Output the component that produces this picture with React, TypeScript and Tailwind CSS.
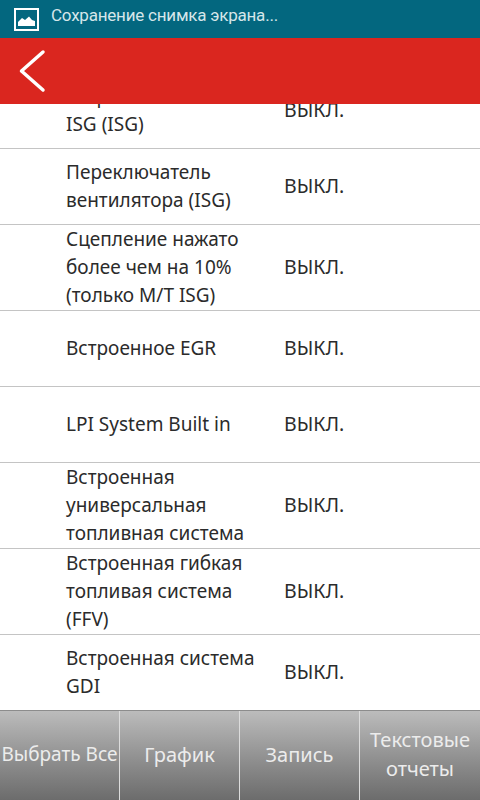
const rows = [
  { lines: ["Встроенная система", "ISG (ISG)"], h: "h-[76px]" },
  { lines: ["Переключатель", "вентилятора (ISG)"], h: "h-[76px]" },
  { lines: ["Сцепление нажато", "более чем на 10%", "(только M/T ISG)"], h: "h-[86px]" },
  { lines: ["Встроенное EGR"], h: "h-[76px]" },
  { lines: ["LPI System Built in"], h: "h-[76px]" },
  { lines: ["Встроенная", "универсальная", "топливная система"], h: "h-[86px]" },
  { lines: ["Встроенная гибкая", "топливая система", "(FFV)"], h: "h-[86px]" },
  { lines: ["Встроенная система", "GDI"], h: "h-[76px]" },
];

const buttons = [
  { text: "Выбрать Все", size: "text-[19px]" },
  { text: "График", size: "text-[20px]" },
  { text: "Запись", size: "text-[20px]" },
  { text: "Текстовые\nотчеты", size: "text-[20px]" },
];

export default function App() {
  return (
    <div className="w-[480px] h-[800px] flex flex-col overflow-hidden bg-white font-['Noto_Sans',sans-serif]">
      {/* Status bar */}
      <div className="h-[38px] shrink-0 bg-[#03677f] flex items-center pl-[14px] gap-[12px]">
        <svg width="25" height="23" viewBox="0 0 25 23" className="shrink-0">
          <rect x="1" y="1" width="23" height="21" fill="#03677f" stroke="#ffffff" strokeWidth="2" />
          <path d="M4 18 V14 L8 10 L11 12 L15 8.5 L18 12 L21 13 V18 Z" fill="#ffffff" />
        </svg>
        <span className="pb-[6px] font-['Roboto',sans-serif] text-[17px] tracking-[-0.22px] text-[#d5e6ea] whitespace-nowrap">Сохранение снимка экрана...</span>
      </div>

      {/* Header */}
      <div className="h-[66px] shrink-0 bg-[#da261f] flex items-center relative z-10">
        <svg width="56" height="56" viewBox="0 0 56 56" className="ml-[5px]" fill="none">
          <path d="M38 9 L16.5 28 L38 47" stroke="#ffffff" strokeWidth="3.5" strokeLinecap="round" strokeLinejoin="round" />
        </svg>
      </div>

      {/* List */}
      <div className="flex-1 min-h-0 overflow-hidden">
        <div className="-mt-[31px]">
          {rows.map((row) => (
            <div key={row.lines.join()} className={`${row.h} flex items-center pb-[2px] border-b border-[#c4c4c4] last:border-0 text-[#2b2b2b] text-[19px] leading-[28px]`}>
              <div className="w-[284px] pl-[66px] shrink-0">
                {row.lines.map((l) => (
                  <div key={l} className="whitespace-nowrap">{l}</div>
                ))}
              </div>
              <div className="text-[19.5px]">ВЫКЛ.</div>
            </div>
          ))}
        </div>
      </div>

      {/* Bottom buttons */}
      <div className="h-[90px] shrink-0 grid grid-cols-4 border-t border-[#8c8c8c] bg-gradient-to-b from-[#bcbcbc] to-[#6c6c6c]">
        {buttons.map((b) => (
          <div key={b.text} className={`${b.size} flex items-center justify-center text-center pb-[3px] text-[#ececec] leading-[29px] border-r border-[#dcdcdc] last:border-0 whitespace-pre`}>
            {b.text}
          </div>
        ))}
      </div>
    </div>
  );
}
